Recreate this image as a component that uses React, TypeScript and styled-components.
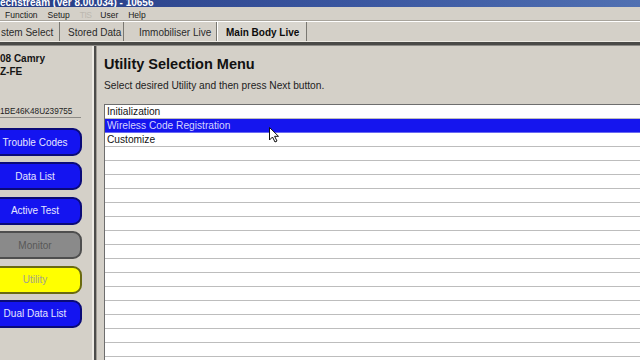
import styled, { createGlobalStyle } from 'styled-components';

const GlobalStyle = createGlobalStyle`
    html, body {
        margin: 0;
        padding: 0;
        background: #d4d0c8;
    }
    body {
        font-family: 'Liberation Sans', Arial, sans-serif;
    }
`;

const Window = styled.div`
    position: relative;
    width: 640px;
    height: 360px;
    overflow: hidden;
    display: flex;
    flex-direction: column;
    background: #d4d0c8;
    font-family: 'Liberation Sans', Arial, sans-serif;
    color: #141414;
`;

const TitleBar = styled.div`
    flex-shrink: 0;
    height: 7px;
    overflow: hidden;
    background: linear-gradient(to right, #263c84, #3a56a0 55%, #5070b2);

    span {
        display: block;
        margin-top: -2.5px;
        font-size: 10px;
        line-height: 10px;
        font-weight: bold;
        color: #ffffff;
        white-space: nowrap;
    }
`;

const MenuBar = styled.div`
    flex-shrink: 0;
    height: 14px;
    display: flex;
    align-items: center;
    gap: 10px;
    padding: 2px 0 0 5px;
    box-sizing: border-box;
    border-bottom: 1px solid #a8a49c;
    font-size: 8.5px;
`;

const MenuItem = styled.span<{ $disabled?: boolean }>`
    color: ${(p) => (p.$disabled ? '#bcb8b0' : '#1a1a1a')};
    letter-spacing: ${(p) => (p.$disabled ? '-0.6px' : 'normal')};
    margin-right: ${(p) => (p.$disabled ? '-1px' : '0')};
`;

const TabStrip = styled.div`
    flex-shrink: 0;
    display: flex;
    height: 19px;
    border-top: 1px solid #ffffff;
    border-bottom: 1px solid #eeebe4;
`;

const Tab = styled.div<{ $w: number; $pad: number; $active?: boolean }>`
    flex-shrink: 0;
    width: ${(p) => p.$w}px;
    padding: 2px 0 0 ${(p) => p.$pad}px;
    box-sizing: border-box;
    display: flex;
    align-items: center;
    white-space: nowrap;
    font-size: 10px;
    font-weight: ${(p) => (p.$active ? 'bold' : 'normal')};
    color: ${(p) => (p.$active ? '#0c0c0c' : '#2a2a2a')};
    background: ${(p) => (p.$active ? '#d9d6cf' : 'transparent')};
    border-left: 1px solid ${(p) => (p.$active ? '#ffffff' : 'transparent')};
    border-right: 1px solid #7a7872;
`;

const Ledge = styled.div`
    flex-shrink: 0;
    height: 1px;
    border-top: 3px solid #4a4a47;
    background: #8c8a86;
`;

const Body = styled.div`
    flex: 1;
    min-height: 0;
    display: flex;
`;

const LeftPanel = styled.div`
    flex-shrink: 0;
    width: 92px;
    padding-top: 6px;
    box-sizing: border-box;
    display: flex;
    flex-direction: column;
`;

const VehicleLine = styled.div`
    font-size: 10px;
    line-height: 13px;
    font-weight: bold;
    white-space: nowrap;
`;

const Vin = styled.div`
    width: 81px;
    margin-top: 29px;
    font-size: 8.2px;
    line-height: 10px;
    color: #1e1e1e;
    border-bottom: 1px solid #8c8a86;
`;

const ButtonColumn = styled.div`
    margin-top: 10px;
    display: flex;
    flex-direction: column;
    gap: 6.4px;
`;

const tones = {
    blue: { bg: '#1414f0', border: '#0a0a78', text: '#e6e6ff' },
    gray: { bg: '#8a8a8a', border: '#4e4e4e', text: '#585858' },
    yellow: { bg: '#ffff00', border: '#6a6a10', text: '#a4a48a' },
};

type Tone = keyof typeof tones;

const FuncButton = styled.div<{ $tone: Tone }>`
    width: 94px;
    height: 28px;
    margin-left: -12px;
    box-sizing: border-box;
    display: flex;
    align-items: center;
    justify-content: center;
    border-radius: 9px;
    border: 2px solid ${(p) => tones[p.$tone].border};
    background: ${(p) => tones[p.$tone].bg};
    color: ${(p) => tones[p.$tone].text};
    font-size: 10px;
    white-space: nowrap;
`;

const Splitter = styled.div`
    flex-shrink: 0;
    width: 5px;
    background: linear-gradient(
        to right,
        #eeebe4 0 2px,
        #4c4c4a 2px 4px,
        #a09c94 4px 5px
    );
`;

const RightPanel = styled.div`
    flex: 1;
    min-width: 0;
    padding: 10px 0 0 7px;
    display: flex;
    flex-direction: column;
`;

const Heading = styled.div`
    font-size: 14.5px;
    line-height: 17px;
    font-weight: bold;
    color: #111111;
`;

const Hint = styled.div`
    margin-top: 7px;
    font-size: 10.2px;
    line-height: 12px;
    color: #222222;
`;

const ListBox = styled.div`
    flex: 1;
    margin: 12px -10px 0 0;
    background: #ffffff;
    border-top: 1px solid #6e6e6e;
    border-left: 1px solid #6e6e6e;
    overflow: hidden;
`;

const Row = styled.div<{ $selected?: boolean }>`
    height: 13px;
    padding-left: 2px;
    font-size: 10.2px;
    line-height: 14px;
    white-space: nowrap;
    overflow: hidden;
    background: ${(p) => (p.$selected ? '#1515ee' : '#ffffff')};
    color: ${(p) => (p.$selected ? '#d4d4ff' : '#141414')};
    border-bottom: 1px solid ${(p) => (p.$selected ? '#6a6af2' : '#bdbdbd')};
`;

const Pointer = styled.svg`
    position: absolute;
    left: 269px;
    top: 127px;
`;

const utilities = ['Initialization', 'Wireless Code Registration', 'Customize'];
const blankRows = Array.from({ length: 16 }, (_, i) => i);

const buttons: { label: string; tone: Tone }[] = [
    { label: 'Trouble Codes', tone: 'blue' },
    { label: 'Data List', tone: 'blue' },
    { label: 'Active Test', tone: 'blue' },
    { label: 'Monitor', tone: 'gray' },
    { label: 'Utility', tone: 'yellow' },
    { label: 'Dual Data List', tone: 'blue' },
];

export default function App() {
    return (
        <>
            <GlobalStyle />
            <Window>
                <TitleBar>
                    <span>echstream (Ver 8.00.034) - 10656</span>
                </TitleBar>
                <MenuBar>
                    <MenuItem>Function</MenuItem>
                    <MenuItem>Setup</MenuItem>
                    <MenuItem $disabled>TIS</MenuItem>
                    <MenuItem>User</MenuItem>
                    <MenuItem>Help</MenuItem>
                </MenuBar>
                <TabStrip>
                    <Tab $w={60} $pad={0}>stem Select</Tab>
                    <Tab $w={64} $pad={7}>Stored Data</Tab>
                    <Tab $w={93} $pad={14}>Immobiliser Live</Tab>
                    <Tab $w={90} $pad={8} $active>Main Body Live</Tab>
                </TabStrip>
                <Ledge />
                <Body>
                    <LeftPanel>
                        <VehicleLine>08 Camry</VehicleLine>
                        <VehicleLine>Z-FE</VehicleLine>
                        <Vin>1BE46K48U239755</Vin>
                        <ButtonColumn>
                            {buttons.map((b) => (
                                <FuncButton key={b.label} $tone={b.tone}>
                                    {b.label}
                                </FuncButton>
                            ))}
                        </ButtonColumn>
                    </LeftPanel>
                    <Splitter />
                    <RightPanel>
                        <Heading>Utility Selection Menu</Heading>
                        <Hint>Select desired Utility and then press Next button.</Hint>
                        <ListBox>
                            {utilities.map((u) => (
                                <Row key={u} $selected={u === 'Wireless Code Registration'}>
                                    {u}
                                </Row>
                            ))}
                            {blankRows.map((i) => (
                                <Row key={i} />
                            ))}
                        </ListBox>
                    </RightPanel>
                </Body>
                {/* mouse pointer over the list */}
                <Pointer width="11" height="16" viewBox="0 0 11 16">
                    <path
                        d="M0.5 0.5 L0.5 13 L3.5 10 L6 15 L8 14 L5.6 9.3 L9.5 9.3 Z"
                        fill="#ffffff"
                        stroke="#111111"
                        strokeWidth="1"
                        strokeLinejoin="round"
                    />
                </Pointer>
            </Window>
        </>
    );
}
